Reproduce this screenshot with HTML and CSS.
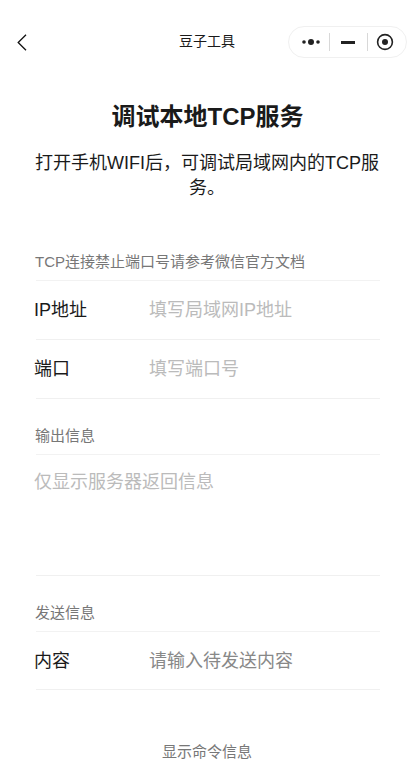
FILE: index.html
```html
<!DOCTYPE html>
<html lang="zh-CN">
<head>
    <meta charset="UTF-8">
    <meta name="viewport" content="width=device-width, initial-scale=1.0">
    <title>豆子工具</title>
    <link rel="stylesheet" href="styles.css">
</head>
<body>
    <div class="navbar">
        <button class="back" aria-label="返回">
            <svg width="10" height="17" viewBox="0 0 10 17"><path d="M9 .7 1.200 8.500 9 16.300" fill="none" stroke="#111" stroke-width="1.300"/></svg>
        </button>
        <div class="nav-title">豆子工具</div>
        <div class="capsule">
            <svg class="cap-more" width="18" height="8" viewBox="0 0 18 8"><circle cx="2" cy="4" r="1.800" fill="#222"/><circle cx="9" cy="4" r="3" fill="#222"/><circle cx="16" cy="4" r="1.800" fill="#222"/></svg>
            <span class="cap-sep"></span>
            <span class="cap-min"></span>
            <span class="cap-sep"></span>
            <svg class="cap-close" width="18" height="18" viewBox="0 0 18 18"><circle cx="9" cy="9" r="7.400" fill="none" stroke="#222" stroke-width="1.600"/><circle cx="9" cy="9" r="3" fill="#222"/></svg>
        </div>
    </div>

    <div class="page">
        <h1>调试本地TCP服务</h1>
        <p class="desc">打开手机WIFI后，可调试局域网内的TCP服务。</p>

        <div class="group-title first">TCP连接禁止端口号请参考微信官方文档</div>
        <div class="cell">
            <label>IP地址</label>
            <input type="text" placeholder="填写局域网IP地址">
        </div>
        <div class="cell">
            <label>端口</label>
            <input type="text" placeholder="填写端口号">
        </div>

        <div class="group-title">输出信息</div>
        <div class="output-box">
            <textarea class="output" placeholder="仅显示服务器返回信息"></textarea>
        </div>

        <div class="group-title">发送信息</div>
        <div class="cell short">
            <label>内容</label>
            <input class="dark" type="text" placeholder="请输入待发送内容">
        </div>

        <div class="toggle">显示命令信息</div>
    </div>
</body>
</html>
```

FILE: styles.css
```css
* {
    box-sizing: border-box;
}
body {
    margin: 0;
    height: 780px;
    overflow: hidden;
    background-color: #fff;
    color: #1a1a1a;
    font-family: "Liberation Sans", "Noto Sans CJK SC", sans-serif;
}
.navbar {
    display: flex;
    align-items: center;
    justify-content: space-between;
    position: relative;
    height: 32px;
    margin: 26px 7px 0 17px;
}
.back {
    display: flex;
    padding: 0;
    border: none;
    background: none;
}
.nav-title {
    position: absolute;
    left: -17px;
    right: -7px;
    padding-bottom: 4px;
    text-align: center;
    font-size: 14px;
    pointer-events: none;
}
.capsule {
    display: flex;
    align-items: center;
    width: 119px;
    height: 32px;
    padding-left: 13px;
    border: 1px solid #f0f0f0;
    border-radius: 16px;
    background-color: #fff;
}
.cap-sep {
    width: 1px;
    height: 18px;
    margin: 0 11px 0 9px;
    background-color: #d8d8d8;
}
.cap-min {
    width: 14px;
    height: 3px;
    margin-right: 12px;
    background-color: #222;
}
.cap-min + .cap-sep {
    margin: 0 8px 0 0;
}
.page {
    padding: 0 34px 0 36px;
}
h1 {
    margin: 43px -1px 0 -2px;
    font-size: 24px;
    line-height: 32px;
    font-weight: 700;
    text-align: center;
}
.desc {
    margin: 18px 0 0 -2px;
    font-size: 18px;
    line-height: 25px;
    text-align: center;
}
.group-title {
    height: 56px;
    padding-top: 27px;
    border-bottom: 1px solid #f2f2f2;
    font-size: 15px;
    line-height: 20px;
    text-indent: -1px;
    color: #777;
}
.group-title.first {
    margin-top: 24px;
}
.cell {
    display: flex;
    align-items: center;
    height: 59px;
    border-bottom: 1px solid #f0f0f0;
    font-size: 18px;
    line-height: 25px;
}
.cell.short {
    height: 58px;
    padding-top: 2px;
}
.cell label {
    width: 115px;
    margin-left: -2px;
    flex-shrink: 0;
}
.cell input {
    flex: 1;
    min-width: 0;
    height: 25px;
    padding: 0;
    border: none;
    outline: none;
    font: inherit;
}
.cell input::placeholder,
.output::placeholder {
    color: #bbb;
    opacity: 1;
}
.cell input.dark::placeholder {
    color: #888;
}
.output-box {
    height: 121px;
    border-bottom: 1px solid #f0f0f0;
}
.output {
    display: block;
    width: 100%;
    height: 100%;
    margin-left: -2px;
    padding: 15px 0 0;
    border: none;
    border-radius: 0;
    outline: none;
    resize: none;
    font: inherit;
    font-size: 18px;
    line-height: 25px;
}
.toggle {
    margin-top: 52px;
    margin-left: -2px;
    text-align: center;
    font-size: 15px;
    line-height: 20px;
    color: #777;
}
```
